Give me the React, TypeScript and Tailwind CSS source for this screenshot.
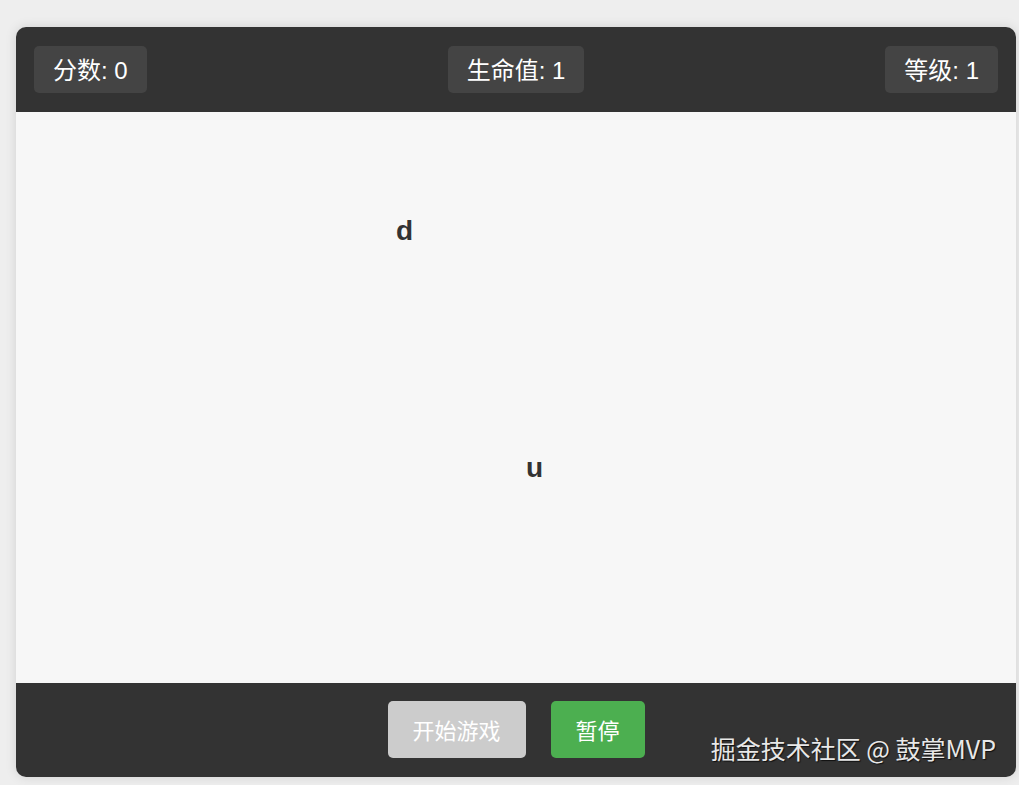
import React from 'react'

const font = { fontFamily: '"Liberation Sans", "Noto Sans CJK SC", sans-serif' }

interface Letter {
  char: string
  x: number
  y: number
}

const letters: Letter[] = [
  { char: 'd', x: 380, y: 98 },
  { char: 'u', x: 510, y: 335 },
]

function Stat({ label, value }: { label: string; value: number }) {
  return (
    <div className="rounded-[5px] bg-[#444444] px-[19px] pt-[9px] pb-[7px] text-[24px] leading-[31px] text-white">
      {label}: {value}
    </div>
  )
}

export default function App() {
  return (
    <div className="min-h-[785px] bg-[#eeeeee] pt-[27px] pl-[16px]" style={font}>
      <div className="relative w-[1000px] overflow-hidden rounded-[10px] shadow-[0_0_12px_rgba(0,0,0,0.12)]">
        {/* top bar */}
        <div className="flex h-[85px] items-center justify-between bg-[#333333] px-[18px]">
          <Stat label="分数" value={0} />
          <Stat label="生命值" value={1} />
          <Stat label="等级" value={1} />
        </div>

        {/* play field */}
        <div className="relative h-[571px] bg-[#f7f7f7]">
          {letters.map((l, i) => (
            <span
              key={i}
              className="absolute text-[28px] font-bold text-[#333333]"
              style={{ left: l.x, top: l.y }}
            >
              {l.char}
            </span>
          ))}
        </div>

        {/* controls */}
        <div className="flex h-[94px] items-start justify-center gap-[25px] bg-[#333333] pt-[18px]">
          <button className="h-[57px] w-[138px] rounded-[5px] bg-[#cccccc] pt-[4px] text-[22px] text-white">开始游戏</button>
          <button className="h-[57px] w-[94px] rounded-[5px] bg-[#4caf50] pt-[4px] text-[22px] text-white">暂停</button>
        </div>

        <div
          className="absolute right-[20px] bottom-[12px] text-[25px] leading-[34px] text-[#e8e8e8] [text-shadow:1px_1px_1px_rgba(0,0,0,0.7)]"
          style={{ fontFamily: '"Noto Sans CJK SC", sans-serif' }}
        >
          掘金技术社区 @ 鼓掌MVP
        </div>
      </div>
    </div>
  )
}
